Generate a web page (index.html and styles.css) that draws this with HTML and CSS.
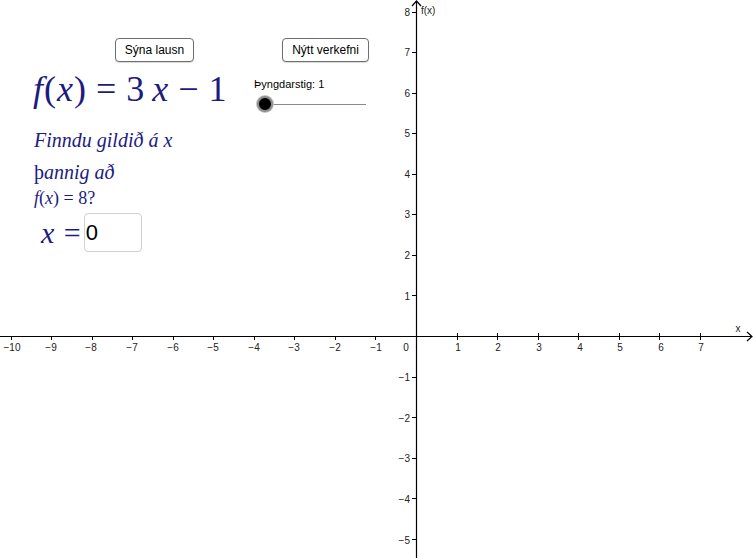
FILE: index.html
```html
<!DOCTYPE html>
<html>
<head>
<meta charset="utf-8">
<link rel="stylesheet" href="styles.css">
</head>
<body>
<div class="canvas">
  <svg class="axes" width="753" height="558" viewBox="0 0 753 558" xmlns="http://www.w3.org/2000/svg">
    <g stroke="#000" stroke-width="1.2" fill="none">
      <line x1="0" y1="336.5" x2="752" y2="336.5"/>
      <line x1="416.5" y1="1" x2="416.5" y2="558"/>
      <polyline points="747,332 752,336.5 747,341"/>
      <polyline points="412,6 416.5,1 421,6"/>
    </g>
    <g class="lbl" font-family="Liberation Sans, Arial, sans-serif" font-size="10" fill="#222">
      <text x="12" y="351" text-anchor="middle">−10</text>
      <text x="51" y="351" text-anchor="middle">−9</text>
      <text x="91" y="351" text-anchor="middle">−8</text>
      <text x="132" y="351" text-anchor="middle">−7</text>
      <text x="173" y="351" text-anchor="middle">−6</text>
      <text x="213" y="351" text-anchor="middle">−5</text>
      <text x="254" y="351" text-anchor="middle">−4</text>
      <text x="294" y="351" text-anchor="middle">−3</text>
      <text x="335" y="351" text-anchor="middle">−2</text>
      <text x="376" y="351" text-anchor="middle">−1</text>
      <text x="406" y="351" text-anchor="middle">0</text>
      <text x="458" y="351" text-anchor="middle">1</text>
      <text x="498" y="351" text-anchor="middle">2</text>
      <text x="539" y="351" text-anchor="middle">3</text>
      <text x="580" y="351" text-anchor="middle">4</text>
      <text x="620" y="351" text-anchor="middle">5</text>
      <text x="661" y="351" text-anchor="middle">6</text>
      <text x="701" y="351" text-anchor="middle">7</text>
      <text x="738" y="332" text-anchor="middle">x</text>
      <text x="421" y="14">f(x)</text>
      <text x="410" y="16" text-anchor="end">8</text>
      <text x="410" y="56" text-anchor="end">7</text>
      <text x="410" y="97" text-anchor="end">6</text>
      <text x="410" y="137" text-anchor="end">5</text>
      <text x="410" y="178" text-anchor="end">4</text>
      <text x="410" y="218" text-anchor="end">3</text>
      <text x="410" y="259" text-anchor="end">2</text>
      <text x="410" y="300" text-anchor="end">1</text>
      <text x="410" y="381" text-anchor="end">−1</text>
      <text x="410" y="422" text-anchor="end">−2</text>
      <text x="410" y="462" text-anchor="end">−3</text>
      <text x="410" y="503" text-anchor="end">−4</text>
      <text x="410" y="544" text-anchor="end">−5</text>
    </g>
    <g stroke="#000" stroke-width="1">
      <line x1="11.5" y1="336" x2="11.5" y2="340"/>
      <line x1="51.5" y1="336" x2="51.5" y2="340"/>
      <line x1="92.5" y1="336" x2="92.5" y2="340"/>
      <line x1="132.5" y1="336" x2="132.5" y2="340"/>
      <line x1="173.5" y1="336" x2="173.5" y2="340"/>
      <line x1="213.5" y1="336" x2="213.5" y2="340"/>
      <line x1="254.5" y1="336" x2="254.5" y2="340"/>
      <line x1="294.5" y1="336" x2="294.5" y2="340"/>
      <line x1="335.5" y1="336" x2="335.5" y2="340"/>
      <line x1="375.5" y1="336" x2="375.5" y2="340"/>
      <line x1="457.5" y1="333" x2="457.5" y2="340"/>
      <line x1="497.5" y1="333" x2="497.5" y2="340"/>
      <line x1="538.5" y1="333" x2="538.5" y2="340"/>
      <line x1="578.5" y1="333" x2="578.5" y2="340"/>
      <line x1="619.5" y1="333" x2="619.5" y2="340"/>
      <line x1="659.5" y1="333" x2="659.5" y2="340"/>
      <line x1="700.5" y1="333" x2="700.5" y2="340"/>
      <line x1="412" y1="12.5" x2="416" y2="12.5"/>
      <line x1="412" y1="52.5" x2="416" y2="52.5"/>
      <line x1="412" y1="93.5" x2="416" y2="93.5"/>
      <line x1="412" y1="133.5" x2="416" y2="133.5"/>
      <line x1="412" y1="174.5" x2="416" y2="174.5"/>
      <line x1="412" y1="214.5" x2="416" y2="214.5"/>
      <line x1="412" y1="255.5" x2="416" y2="255.5"/>
      <line x1="412" y1="295.5" x2="416" y2="295.5"/>
      <line x1="412" y1="377.5" x2="416" y2="377.5"/>
      <line x1="412" y1="417.5" x2="416" y2="417.5"/>
      <line x1="412" y1="458.5" x2="416" y2="458.5"/>
      <line x1="412" y1="498.5" x2="416" y2="498.5"/>
      <line x1="412" y1="539.5" x2="416" y2="539.5"/>
    </g>
  </svg>

  <button class="btn btn-solve">Sýna lausn</button>
  <button class="btn btn-new">Nýtt verkefni</button>

  <div class="formula">
    <span class="it">f</span>(<span class="it">x</span>)<span class="op">=</span>3<span class="it sp">x</span><span class="op">−</span>1
  </div>

  <div class="slider">
    <div class="slider-label">Þyngdarstig: 1</div>
    <div class="slider-track">
      <span class="knob"></span>
    </div>
  </div>

  <div class="task">
    <div class="task-line1"><span class="it">Finndu gildið á x</span></div>
    <div class="task-line2"><span class="up">þ</span><span class="it">annig að</span></div>
    <div class="task-line3"><span class="it">f</span>(<span class="it">x</span>) = 8?</div>
  </div>

  <div class="answer">
    <span class="ans-label"><span class="it">x</span> =</span>
    <span class="ans-box">0</span>
  </div>
</div>
</body>
</html>
```

FILE: styles.css
```css
html, body {
  margin: 0;
  padding: 0;
  background: #fff;
}
.canvas {
  position: relative;
  width: 753px;
  height: 558px;
  overflow: hidden;
  font-family: "Liberation Sans", Arial, sans-serif;
}
.axes {
  position: absolute;
  left: 0;
  top: 0;
}
.btn {
  position: absolute;
  top: 38px;
  height: 24px;
  padding: 0 8px;
  background: #fff;
  border: 1px solid #6e6e6e;
  border-radius: 4px;
  font-family: "Liberation Sans", Arial, sans-serif;
  font-size: 12px;
  color: #000;
  box-shadow: 0 1px 1px rgba(0,0,0,0.15);
}
.btn-solve { left: 115px; width: 79px; }
.btn-new { left: 282px; width: 87px; }

.it { font-style: italic; }
.formula {
  position: absolute;
  left: 33px;
  top: 68px;
  font-family: "Liberation Serif", "Times New Roman", serif;
  font-size: 36px;
  color: #1c1c80;
  white-space: nowrap;
  letter-spacing: 1px;
}
.formula .op { margin: 0 9px; }
.formula .sp { margin-left: 7px; }

.slider {
  position: absolute;
  left: 254px;
  top: 78px;
  width: 115px;
}
.slider-label {
  font-size: 11px;
  color: #000;
  line-height: 13px;
}
.slider-track {
  position: relative;
  margin: 13px 0 0 8px;
  width: 104px;
  height: 1px;
  background: #8a8a8a;
}
.knob {
  position: absolute;
  left: -5px;
  top: -8px;
  width: 12px;
  height: 12px;
  border-radius: 50%;
  background: #000;
  border: 2px solid #8c8c8c;
  box-shadow: 0 0 0 1px #c4c4c4;
}

.task {
  position: absolute;
  left: 34px;
  top: 128px;
  font-family: "Liberation Serif", "Times New Roman", serif;
  color: #1c1c80;
}
.task-line1 { font-size: 20px; line-height: 24px; }
.task-line2 { font-size: 20px; line-height: 24px; margin-top: 8px; }
.task-line3 { font-size: 18px; line-height: 20px; margin-top: 4px; }

.answer {
  position: absolute;
  left: 41px;
  top: 213px;
  display: flex;
  align-items: center;
}
.ans-label {
  font-family: "Liberation Serif", "Times New Roman", serif;
  font-size: 30px;
  color: #1c1c80;
  letter-spacing: 1px;
}
.ans-box {
  margin-left: 2px;
  width: 58px;
  height: 39px;
  border: 1px solid #d0d0d0;
  border-radius: 4px;
  box-sizing: border-box;
  font-size: 22px;
  line-height: 37px;
  padding-left: 1px;
  color: #000;
}
```
